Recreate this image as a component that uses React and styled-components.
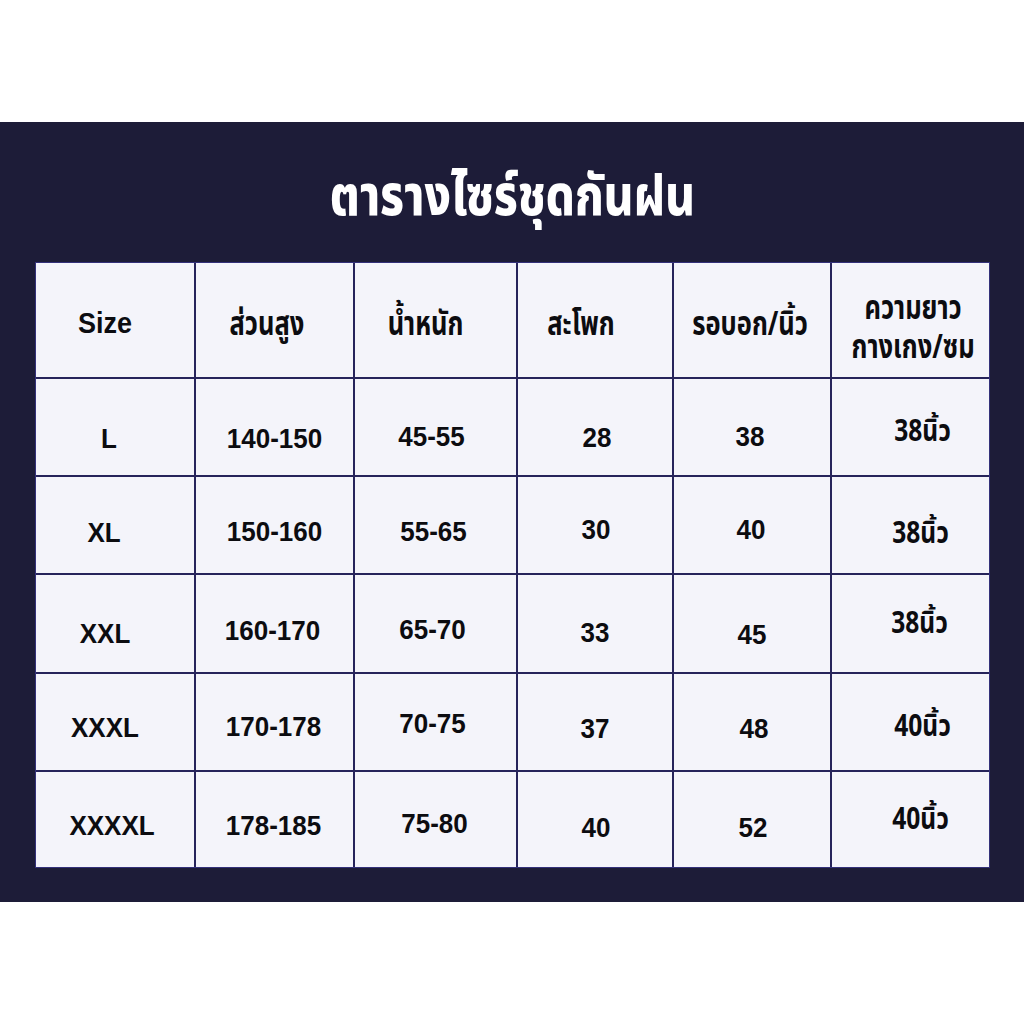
import styled, { createGlobalStyle } from 'styled-components';

const GlobalStyle = createGlobalStyle`
  html, body {
    margin: 0;
    padding: 0;
    background: #ffffff;
  }
`;

const THAI = `"Noto Sans Thai", "Noto Sans Thai Looped", "Noto Sans", "DejaVu Sans", sans-serif`;
const LATIN = `"Liberation Sans", Arial, ${THAI}`;

// widths / heights of the cells, the 2px rule lines come from the grid gap
const columns = [158, 157, 161, 154, 156, 157];
const rowHeights = [114, 96, 96, 97, 96, 95];

const header = [
  { text: 'Size', dx: -10, dy: 3, latin: true },
  { text: 'ส่วนสูง', dx: -8, dy: 4 },
  { text: 'น้ำหนัก', dx: -10, dy: 4 },
  { text: 'สะโพก', dx: -14, dy: 4 },
  { text: 'รอบอก/นิ้ว', dx: -2, dy: 4 },
  { text: 'ความยาว\nกางเกง/ซม', dx: 3, dy: 8 },
];

const rows = [
  [['L', -6, 11], ['140-150', 0, 11], ['45-55', -4, 9], ['28', 2, 10], ['38', -2, 9], ['38นิ้ว', 12, 5]],
  [['XL', -11, 7], ['150-160', 0, 6], ['55-65', -2, 6], ['30', 1, 4], ['40', -1, 4], ['38นิ้ว', 10, 9]],
  [['XXL', -10, 9], ['160-170', -2, 6], ['65-70', -3, 5], ['33', 0, 8], ['45', 0, 10], ['38นิ้ว', 9, 0]],
  [['XXXL', -10, 5], ['170-178', -1, 4], ['70-75', -3, 1], ['37', 0, 6], ['48', 2, 6], ['40นิ้ว', 12, 5]],
  [['XXXXL', -3, 5], ['178-185', -1, 5], ['75-80', -1, 3], ['40', 1, 7], ['52', 1, 7], ['40นิ้ว', 10, 0]],
];

export default function App() {
  return (
    <>
      <GlobalStyle />
      <Page>
        <Band>
          <TitleBar>
            <Title>ตารางไซร์ชุดกันฝน</Title>
          </TitleBar>
          <Table>
            {header.map((h, i) => (
              <Cell key={`h${i}`}>
                {h.latin ? (
                  <LatinText $dx={h.dx} $dy={h.dy} $head>{h.text}</LatinText>
                ) : (
                  <ThaiText $dx={h.dx} $dy={h.dy} $head>{h.text}</ThaiText>
                )}
              </Cell>
            ))}
            {rows.map((row, r) =>
              row.map(([text, dx, dy], c) => (
                <Cell key={`${r}-${c}`}>
                  {c === 5 ? (
                    <ThaiText $dx={dx} $dy={dy}>{text}</ThaiText>
                  ) : (
                    <LatinText $dx={dx} $dy={dy}>{text}</LatinText>
                  )}
                </Cell>
              ))
            )}
          </Table>
        </Band>
      </Page>
    </>
  );
}

const Page = styled.div`
  width: 1024px;
  height: 1024px;
  padding-top: 122px;
  box-sizing: border-box;
  background: #ffffff;
`;

const Band = styled.section`
  height: 780px;
  box-sizing: border-box;
  background: #1d1c38;
  padding: 0 34px 34px 35px;
  display: flex;
  flex-direction: column;
`;

const TitleBar = styled.div`
  flex: 0 0 140px;
  display: flex;
  align-items: center;
  justify-content: center;
  padding-top: 12px;
  box-sizing: border-box;
`;

const Title = styled.h1`
  margin: 0;
  color: #ffffff;
  font-family: ${THAI};
  font-weight: 800;
  font-size: 57px;
  line-height: 1;
  white-space: nowrap;
  transform: scaleX(0.8);
`;

const Table = styled.div`
  display: grid;
  grid-template-columns: ${columns.map((w) => `${w}px`).join(' ')};
  grid-template-rows: ${rowHeights.map((h) => `${h}px`).join(' ')};
  width: 955px;
  background: #26235a;
  border: 1px solid #34317a;
  box-sizing: border-box;
  gap: 2px;
`;

const Cell = styled.div`
  background: #f4f4fa;
  display: flex;
  align-items: center;
  justify-content: center;
  overflow: hidden;
`;

const LatinText = styled.span`
  display: block;
  white-space: nowrap;
  color: #0c0c10;
  font-family: ${LATIN};
  font-weight: 700;
  font-size: ${(p) => (p.$head ? 27 : 26)}px;
  line-height: 30px;
  transform: translate(${(p) => p.$dx}px, ${(p) => p.$dy}px) scaleY(1.08);
`;

const ThaiText = styled.span`
  display: block;
  white-space: pre;
  text-align: center;
  color: #0c0c10;
  font-family: ${THAI};
  font-weight: 700;
  font-size: ${(p) => (p.$head ? 34 : 30)}px;
  line-height: ${(p) => (p.$head ? 39 : 34)}px;
  transform: translate(${(p) => p.$dx}px, ${(p) => p.$dy}px) scaleX(${(p) => (p.$head ? 0.75 : 0.82)});
`;
